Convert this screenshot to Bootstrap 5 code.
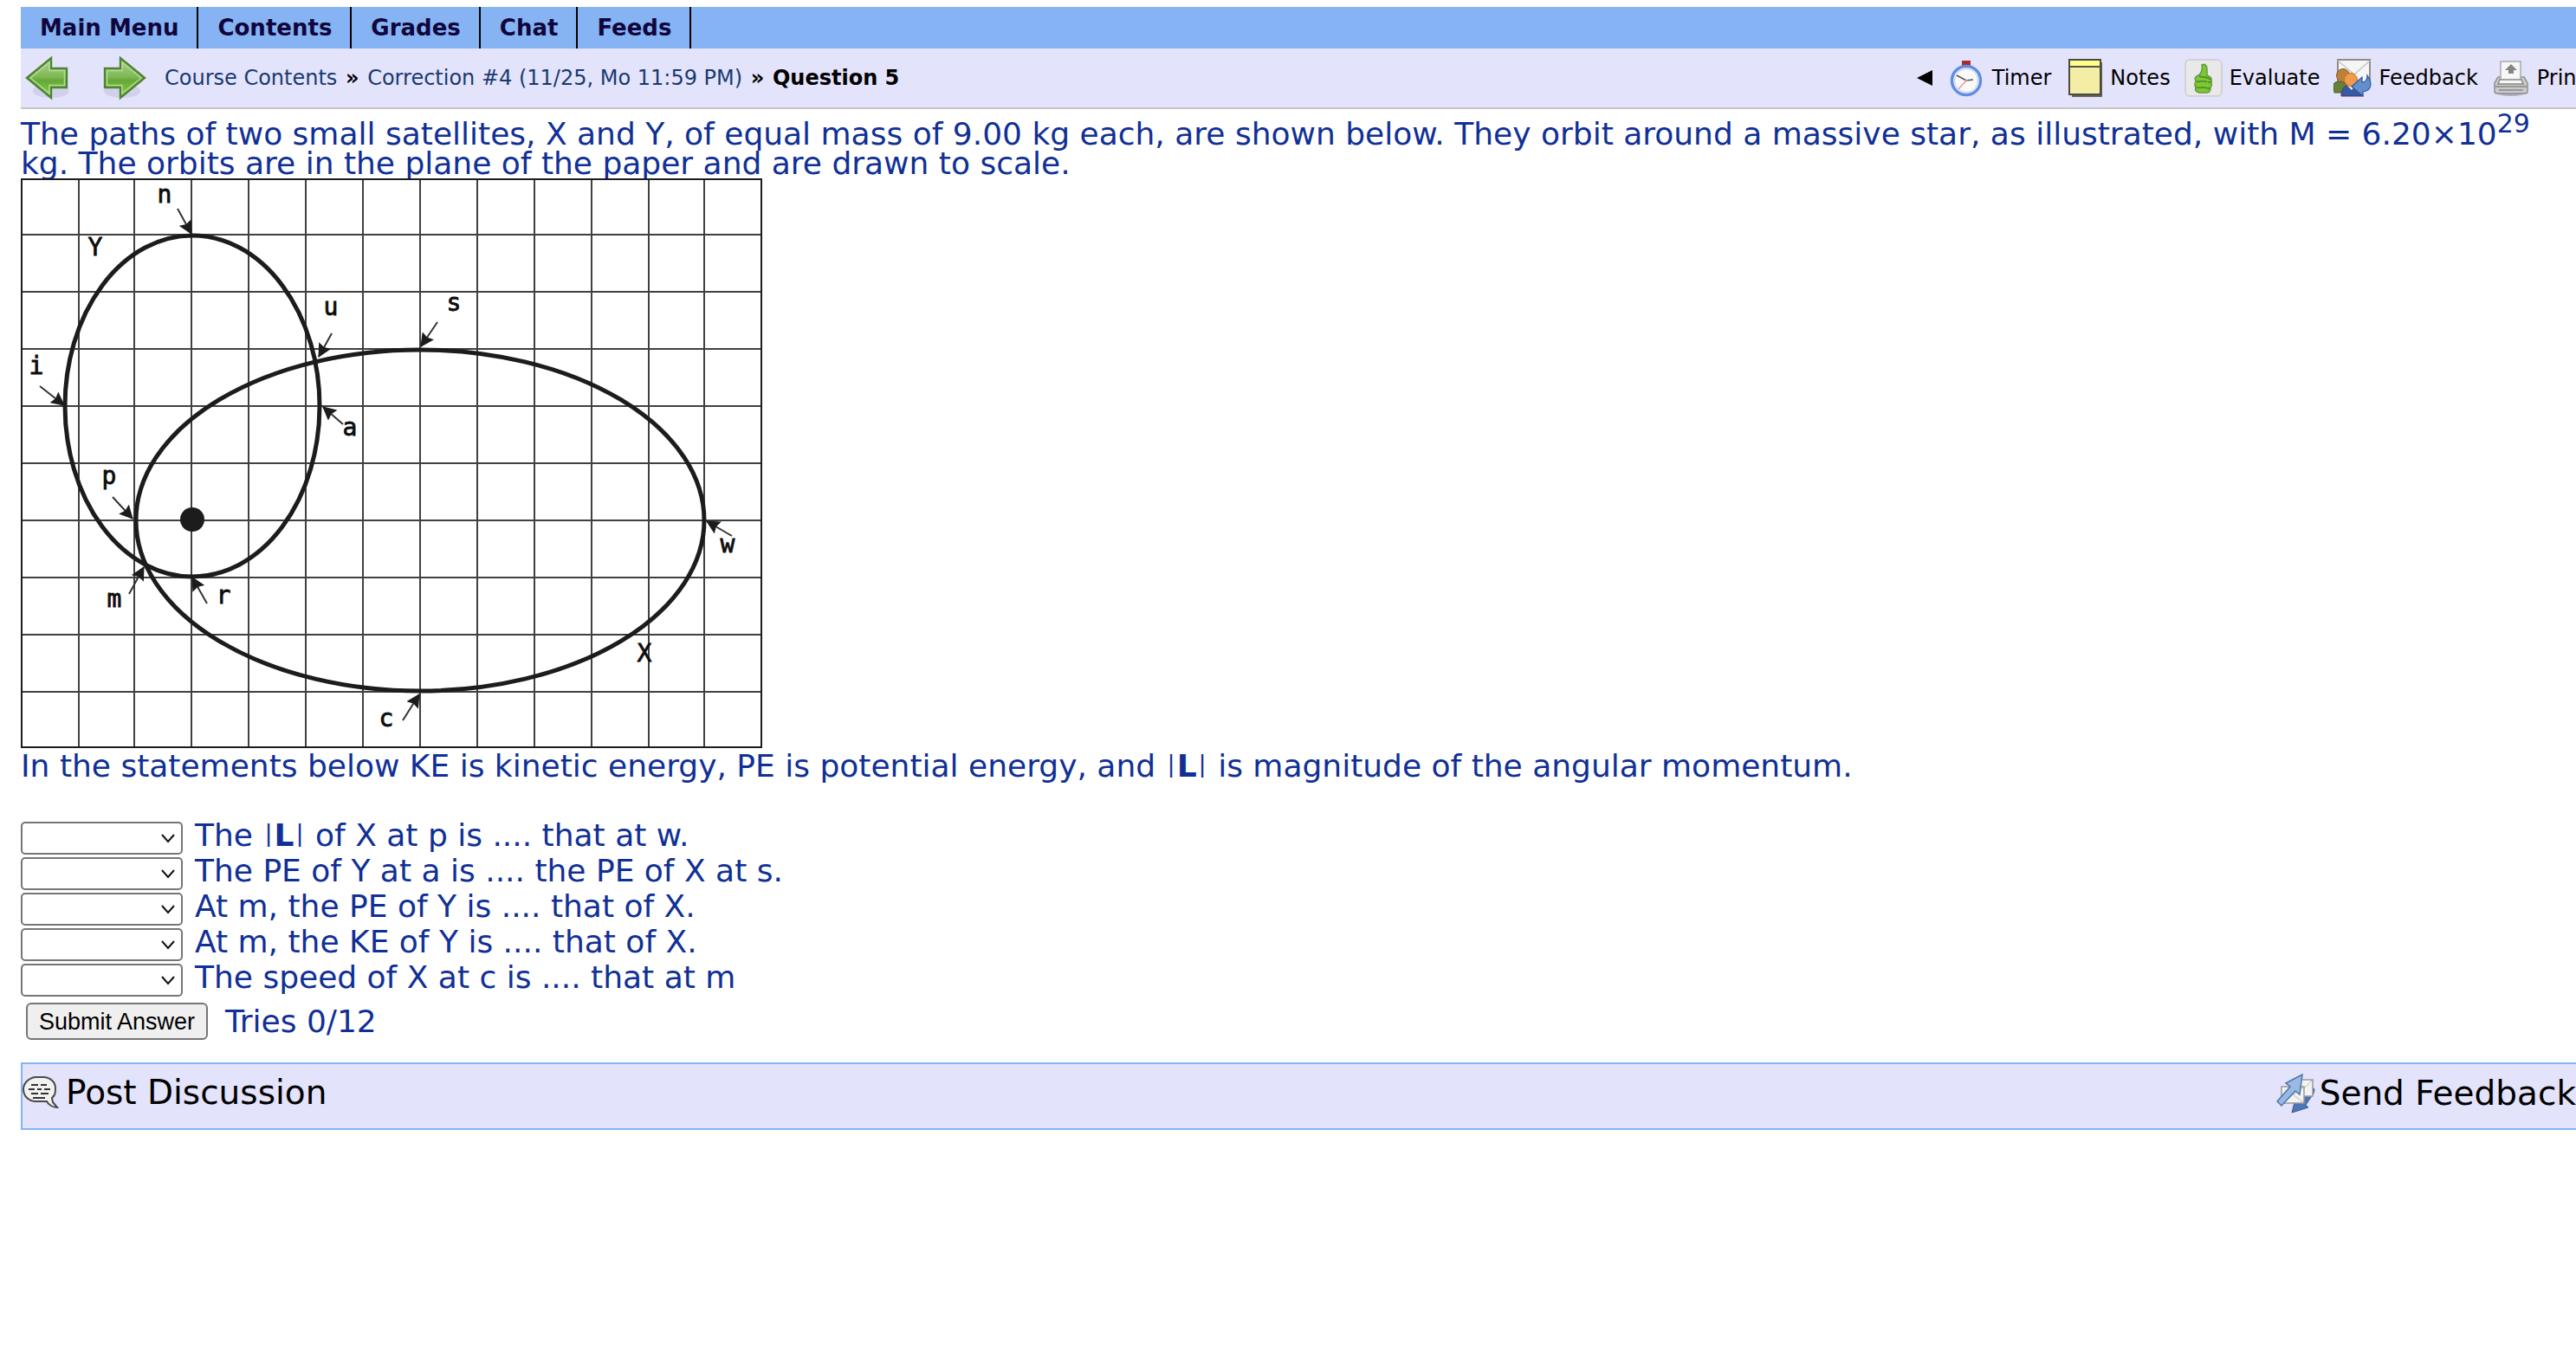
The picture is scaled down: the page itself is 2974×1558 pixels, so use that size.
<!DOCTYPE html>
<html lang="en">
<head>
<meta charset="utf-8">
<meta name="viewport" content="width=device-width, initial-scale=1">
<title>Question 5</title>
<link href="https://cdn.jsdelivr.net/npm/bootstrap@5.3.0/dist/css/bootstrap.min.css" rel="stylesheet">
<style>
body { font-family: Verdana, "DejaVu Sans", sans-serif; font-size: 36px; line-height: 34px; color: #103096; background: #fff; padding: 8px 0 0 24px; overflow-x: hidden; }
a { text-decoration: none; }
svg { display: block; flex: none; }
.menu-bar { background: #85b3f4; height: 48px; font-size: 26px; font-weight: bold; }
.menu-bar a { color: #10063c; padding: 1px 21px 0 22px; line-height: 47px; border-right: 2px solid #000; }
.crumb-bar { background: #e4e3fc; height: 70px; border-bottom: 2px solid #c6c6c8; font-size: 24px; color: #000; margin-right: -10px; white-space: nowrap; }
.crumb-bar .path-link { color: #183a70; }
.crumb-bar .path-sep { margin: 0 2px; }
.crumb-bar .tool { color: #000; gap: 8px; }
.tools { gap: 16px; }
.arrows { gap: 40px; padding: 0 21px 0 5px; }
.question { padding-top: 12px; }
.question sup { font-size: 30px; line-height: 0; top: -14px; vertical-align: baseline; }
.statement { margin: 4px 0 46px; }
.vbar { font-size: 27px; line-height: 0; vertical-align: 6px; margin: 0 2px; }
.answer-row { height: 41px; gap: 14px; }
.answer-row .form-select { width: 187px; height: 38px; margin-top: 1px; padding: 0 32px 0 8px; border: 2px solid #767676; border-radius: 5px; background-color: #fff; font: 26px "Liberation Sans", sans-serif; background-position: right 6px center; background-size: 18px 12px; background-image: url("data:image/svg+xml,%3Csvg xmlns='http://www.w3.org/2000/svg' viewBox='0 0 18 12'%3E%3Cpath d='M2 2l7 8 7-8' fill='none' stroke='%23111' stroke-width='2'/%3E%3C/svg%3E"); }
.submit-row { padding: 5px 0 0 6px; gap: 20px; }
.submit-row .btn { height: 43px; padding: 0 13px; border: 2px solid #767676; border-radius: 6px; background: #efefef; color: #000; font: 27px/36px "Liberation Sans", Arial, sans-serif; }
.foot-bar { margin-top: 26px; height: 78px; border: 2px solid #85b3f4; border-right: 0; background: #e4e3fc; font-size: 39px; line-height: 44px; padding: 11px 0 0; }
.foot-bar a { color: #000; }
.plot text { font: 28px "DejaVu Sans Mono", monospace; text-anchor: middle; fill: #0c0c0c; stroke: #0c0c0c; stroke-width: .8px; }
</style>
</head>
<body>
<header>
  <nav class="menu-bar d-flex" aria-label="Main">
    <a href="#">Main Menu</a><a href="#">Contents</a><a href="#">Grades</a><a href="#">Chat</a><a href="#">Feeds</a>
  </nav>
  <div class="crumb-bar d-flex align-items-center">
    <div class="arrows d-flex">
      <a href="#" aria-label="Previous"><svg width="50" height="52" viewBox="0 0 50 52"><defs><linearGradient id="green" x1="0" y1="0" x2="0" y2="1"><stop offset="0" stop-color="#b4d29a"/><stop offset=".48" stop-color="#7db852"/><stop offset=".56" stop-color="#66a838"/><stop offset="1" stop-color="#86cf45"/></linearGradient></defs><ellipse cx="30" cy="41" rx="21" ry="8" fill="#9b9ab8" opacity=".25"/><path d="M2 26L30 3v12h18v22H30v12z" fill="url(#green)" stroke="#4e8432" stroke-width="2.4"/><path d="M6 26L28 8v9.500h17.500v17H28V44z" fill="none" stroke="#b6dc97" stroke-width="1.500"/></svg></a>
      <a href="#" aria-label="Next"><svg width="50" height="52" viewBox="0 0 50 52"><ellipse cx="22" cy="41" rx="21" ry="8" fill="#9b9ab8" opacity=".25"/><path d="M48 26L20 3v12H2v22h18v12z" fill="url(#green)" stroke="#4e8432" stroke-width="2.4"/><path d="M44 26L22 8v9.500H4.500v17H22V44z" fill="none" stroke="#b6dc97" stroke-width="1.500"/></svg></a>
    </div>
    <div><a class="path-link" href="#">Course Contents</a> <b class="path-sep">»</b> <a class="path-link" href="#">Correction #4 (11/25, Mo 11:59 PM)</a> <b class="path-sep">»</b> <b>Question 5</b></div>
    <div class="tools d-flex align-items-center ms-auto">
      <a href="#" aria-label="Collapse tools"><svg width="20" height="20" viewBox="0 0 20 20"><path d="M1 10L19 1v18z"/></svg></a>
      <a class="tool d-flex align-items-center" href="#"><svg width="44" height="44" viewBox="0 0 44 44"><rect x="17" y="2" width="10" height="6" fill="#a82c28"/><rect x="19" y="7" width="6" height="4" fill="#999"/><circle cx="22" cy="25" r="16.500" fill="#fafafa" stroke="#5f8de6" stroke-width="3.500"/><circle cx="22" cy="25" r="13.500" fill="none" stroke="#c4cbe0"/><path d="M11 19l11 6 8-1" fill="none" stroke="#555" stroke-width="1.600"/><path d="M23 24L13 35" stroke="#f09a96" stroke-width="1.600"/></svg>Timer</a>
      <a class="tool d-flex align-items-center" href="#"><svg width="44" height="44" viewBox="0 0 44 44"><path d="M8 4h35v40H8z" fill="#626252"/><rect x="5" y="1" width="36" height="40" fill="#f3eda6" stroke="#4b4b40" stroke-width="2"/><rect x="6" y="2" width="34" height="6" fill="#ffff8c"/><path d="M5 9h36" stroke="#55554a" stroke-width="2"/></svg>Notes</a>
      <a class="tool d-flex align-items-center" href="#"><svg width="44" height="44" viewBox="0 0 44 44"><rect x="1" y="1" width="42" height="42" rx="5" fill="#e9e9ea" stroke="#d2d2d6" stroke-width="2"/><path d="M20 7c4-2 6 1 6 5v7l4 2c2 2 1 4 1 6s1 4-1 6c0 4-1 6-4 6h-9c-4-1-5-3-4-6-2-3-1-5 0-7-2-4 0-6 3-7 4-3 5-7 4-12z" fill="#7cc832" stroke="#649843" stroke-width="1.500"/><path d="M14 26c4 1 8-2 12 1M14 33c4 1 9-1 12 1M17 20c5 2 9 0 13 4M27 27h4M26 34h4" fill="none" stroke="#51832e" stroke-width="1.500"/></svg>Evaluate</a>
      <a class="tool d-flex align-items-center" href="#"><svg width="44" height="44" viewBox="0 0 44 44"><path d="M5 1h37v26H5z" fill="#f6f6f6" stroke="#8d8d8d" stroke-width="2"/><path d="M5 2l19 16L42 2" fill="none" stroke="#c5c5c5" stroke-width="1.500"/><path d="M0 30c0-5 14-6 16 2v7H1z" fill="#66823a" stroke="#465c2b"/><circle cx="11" cy="19" r="7.500" fill="#bc803d" stroke="#8c5b27"/><path d="M9 43c0-9 4-13 11-13s14 4 14 13z" fill="#345aa5" stroke="#5c2d59"/><path d="M16 31l5 5 4-5z" fill="#eee"/><circle cx="20" cy="24" r="7.500" fill="#ee9c4b" stroke="#cf7624"/><path d="M21 32l12-11v6c4 0 6-2 6-8 7 10 4 18-5 19v5z" fill="#648fce" stroke="#2d589d" stroke-width="1.200"/></svg>Feedback</a>
      <a class="tool d-flex align-items-center" href="#"><svg width="44" height="44" viewBox="0 0 44 44"><ellipse cx="22" cy="39" rx="17" ry="4" fill="#8d8c9f" opacity=".6"/><path d="M7 21h30l4 7v9q0 3-3 3H6q-3 0-3-3v-9z" fill="#cacaca" stroke="#8e8e8e" stroke-width="1.500"/><rect x="10" y="3" width="23" height="22" fill="#f7f7f7" stroke="#aaa" stroke-width="1.500"/><path d="M22 6l7 7h-4v4h-6v-4h-4z" fill="#858585"/><path d="M9 24h25l2 5H7z" fill="#f6f6f6" stroke="#888" stroke-width="1.500"/><path d="M4 32h36M8 36h28" stroke="#888" stroke-width="1.500"/></svg>Print</a>
    </div>
  </div>
</header>
<main>
  <div class="question">The paths of two small satellites, X and Y, of equal mass of 9.00 kg each, are shown below. They orbit around a massive star, as illustrated, with M = 6.20×10<sup>29</sup><br>kg. The orbits are in the plane of the paper and are drawn to scale.</div>
  <svg class="plot position-relative" width="856" height="658" viewBox="24 206 856 658" role="img" aria-label="Two orbits on a grid">
    <defs><marker id="tip" viewBox="0 0 14 14" refX="13" refY="7" markerWidth="16" markerHeight="16" markerUnits="userSpaceOnUse" orient="auto"><path d="M14 7L0 0l2 7-2 7z" fill="#1c1c1c"/></marker></defs>
    <rect x="24" y="206" width="856" height="658" fill="#fff"/>
    <path d="M91 207v656M155 207v656M221 207v656M287 207v656M353 207v656M419 207v656M485 207v656M551 207v656M617 207v656M683 207v656M749 207v656M813 207v656M25 271h854M25 337h854M25 403h854M25 469h854M25 535h854M25 601h854M25 667h854M25 733h854M25 799h854" stroke="#404040" stroke-width="2" fill="none"/>
    <rect x="25" y="207" width="854" height="656" fill="none" stroke="#1c1c1c" stroke-width="2"/>
    <g fill="none" stroke="#1c1c1c" stroke-width="5"><ellipse cx="222" cy="469" rx="147" ry="197"/><ellipse cx="485" cy="601" rx="328" ry="197"/></g>
    <circle cx="222" cy="600" r="14" fill="#1c1c1c"/>
    <g stroke="#333" stroke-width="2">
      <path marker-end="url(#tip)" d="M205 241L221 270"/><path marker-end="url(#tip)" d="M46 446L74 468"/><path marker-end="url(#tip)" d="M383 385L368 412"/><path marker-end="url(#tip)" d="M396 490L373 470"/><path marker-end="url(#tip)" d="M505 372L486 400"/><path marker-end="url(#tip)" d="M130 574L153 599"/><path marker-end="url(#tip)" d="M149 686L166 655"/><path marker-end="url(#tip)" d="M239 697L222 667"/><path marker-end="url(#tip)" d="M465 832L484 802"/><path marker-end="url(#tip)" d="M845 619L816 602"/>
    </g>
    <text x="190" y="234">n</text><text x="110" y="295">Y</text><text x="42" y="432">i</text><text x="382" y="364">u</text><text x="404" y="503">a</text><text x="524" y="359">s</text><text x="126" y="559">p</text><text x="132" y="701">m</text><text x="258" y="697">r</text><text x="446" y="839">c</text><text x="840" y="638">w</text><text x="744" y="764">X</text>
  </svg>
  <p class="statement">In the statements below KE is kinetic energy, PE is potential energy, and <span class="vbar">|</span><b>L</b><span class="vbar">|</span> is magnitude of the angular momentum.</p>
  <form>
    <div class="answer-row d-flex align-items-start"><select class="form-select" id="q1"><option></option><option>greater than</option><option>less than</option><option>equal to</option></select><label for="q1">The <span class="vbar">|</span><b>L</b><span class="vbar">|</span> of X at p is .... that at w.</label></div>
    <div class="answer-row d-flex align-items-start"><select class="form-select" id="q2"><option></option><option>greater than</option><option>less than</option><option>equal to</option></select><label for="q2">The PE of Y at a is .... the PE of X at s.</label></div>
    <div class="answer-row d-flex align-items-start"><select class="form-select" id="q3"><option></option><option>greater than</option><option>less than</option><option>equal to</option></select><label for="q3">At m, the PE of Y is .... that of X.</label></div>
    <div class="answer-row d-flex align-items-start"><select class="form-select" id="q4"><option></option><option>greater than</option><option>less than</option><option>equal to</option></select><label for="q4">At m, the KE of Y is .... that of X.</label></div>
    <div class="answer-row d-flex align-items-start"><select class="form-select" id="q5"><option></option><option>greater than</option><option>less than</option><option>equal to</option></select><label for="q5">The speed of X at c is .... that at m</label></div>
    <div class="submit-row d-flex align-items-center"><button type="button" class="btn">Submit Answer</button><span>Tries 0/12</span></div>
  </form>
</main>
<footer class="foot-bar d-flex justify-content-between align-items-start">
  <a class="d-flex align-items-center" href="#"><svg class="me-2" width="42" height="40" viewBox="0 0 42 40"><path d="M15 2h10c8 1 13 6 13 13s-1 8-4 11l1 5 5 6c-5 0-10-3-12-7H14C6 29 1 23 1 16S7 3 15 2z" fill="#f2f2f2" stroke="#4a4a4a" stroke-width="2"/><path d="M10 11h8M21 11h7M7 16h7M17 16h5M25 16h7M10 21h8M21 21h9M12 26h14" stroke="#333" stroke-width="2"/></svg>Post Discussion</a>
  <a class="d-flex align-items-center" href="#"><svg class="me-1" width="46" height="46" viewBox="0 0 46 46"><path d="M18 45l4-16 5 4L41 15l3 3-1 5-9 13 3 3z" fill="#4c76b4" stroke="#365c96"/><path d="M19 7h23v19H19z" fill="#f3f3f3" stroke="#999" stroke-width="1.500"/><path d="M20 8l11 10L41 8" fill="none" stroke="#bbb"/><path d="M6 15h26v19H6z" fill="#f3f3f3" stroke="#999" stroke-width="1.500"/><path d="M7 33l12-9 12 9M20 24L31 16" fill="none" stroke="#bbb"/><path d="M30 1l-3 23-5-4L6 37l-5-5 15-17-5-4z" fill="#9ab9e2" stroke="#4b76ad" stroke-width="1.500"/></svg>Send Feedback</a>
</footer>
<script src="https://cdn.jsdelivr.net/npm/bootstrap@5.3.0/dist/js/bootstrap.bundle.min.js"></script>
</body>
</html>
